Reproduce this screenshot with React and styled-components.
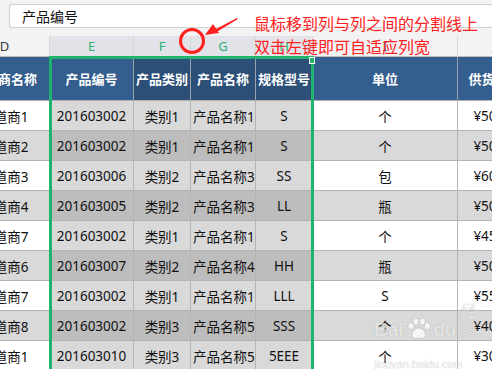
import React from 'react';
import styled, { createGlobalStyle } from 'styled-components';

const GlobalStyle = createGlobalStyle`
  html, body {
    margin: 0;
    padding: 0;
    overflow: hidden;
  }
  body {
    font-family: "Noto Sans", "Noto Sans CJK SC", sans-serif;
  }
`;

const COLS = '90px 84px 57px 65px 57px 145px 74px';
const GREEN = '#20b36e';

const Screen = styled.div`
  position: relative;
  width: 492px;
  height: 369px;
  overflow: hidden;
  background: #f3f3f3;
`;

const FormulaBar = styled.div`
  height: 36px;
  box-sizing: border-box;
  padding: 4px 0 0 9px;
`;

const FormulaInput = styled.div`
  height: 24px;
  box-sizing: border-box;
  display: flex;
  align-items: center;
  padding-left: 12px;
  background: #fff;
  border: 1px solid #d0d0d0;
  border-right: none;
  border-radius: 3px 0 0 3px;
  font-family: "Noto Sans CJK SC", sans-serif;
  font-size: 14px;
  color: #111;
`;

const Sheet = styled.div`
  margin-left: -40px;
  width: 572px;
`;

const Row = styled.div`
  display: grid;
  grid-template-columns: ${COLS};
  height: ${p => p.$h}px;
`;

const Letter = styled.div`
  display: flex;
  align-items: center;
  justify-content: center;
  box-sizing: border-box;
  border-right: 1px solid #d6d6d6;
  border-bottom: 1px solid #bdbdbd;
  background: ${p => (p.$sel ? '#e1e3e8' : '#f3f3f3')};
  color: ${p => (p.$sel ? '#2fb476' : '#2f3a4a')};
  font-family: "Noto Sans", "Liberation Sans", sans-serif;
  font-size: 13px;
`;

const HeadCell = styled.div`
  display: flex;
  align-items: center;
  justify-content: center;
  box-sizing: border-box;
  overflow: hidden;
  white-space: nowrap;
  background: ${p => (p.$sel ? '#2c4f77' : '#345e8e')};
  border-right: 1px solid #9aa2ac;
  border-bottom: 1px solid #b0b0b0;
  color: #fff;
  font-family: "Noto Sans CJK SC", sans-serif;
  font-weight: 700;
  font-size: 13px;
`;

const Cell = styled.div`
  display: flex;
  align-items: center;
  justify-content: ${p => (p.$left ? 'flex-start' : 'center')};
  padding-left: ${p => (p.$left ? '2px' : '0')};
  box-sizing: border-box;
  overflow: hidden;
  white-space: nowrap;
  background: ${p => p.$bg};
  border-right: 1px solid #b4b4b4;
  border-bottom: 1px solid #b4b4b4;
  color: #111;
  font-size: 13.5px;
`;

const Selection = styled.div`
  position: absolute;
  left: 49px;
  top: 56px;
  width: 265px;
  height: 330px;
  box-sizing: border-box;
  border: 3px solid ${GREEN};
  pointer-events: none;
`;

const Handle = styled.div`
  position: absolute;
  left: 309px;
  top: 57px;
  width: 6px;
  height: 7px;
  box-sizing: border-box;
  background: ${GREEN};
  border: 1px solid #fff;
`;

const Note = styled.div`
  position: absolute;
  left: 254px;
  top: 12px;
  color: #ff2020;
  font-family: "Noto Sans CJK SC", sans-serif;
  font-size: 16px;
  line-height: 23px;
  white-space: nowrap;
`;

const Marker = styled.svg`
  position: absolute;
  left: 170px;
  top: 10px;
`;

const Watermark = styled.div`
  position: absolute;
  left: 374px;
  top: 300px;
  color: rgba(255, 255, 255, 0.7);
  text-shadow: 0 0 1px rgba(0, 0, 0, 0.25);
  pointer-events: none;
`;

const MarkLine = styled.div`
  display: flex;
  align-items: flex-end;
  gap: 2px;
  font-family: "Liberation Sans", sans-serif;
  font-weight: 700;
  font-size: 19px;
  line-height: 20px;
`;

const MarkCn = styled.span`
  font-family: "Noto Sans CJK SC", sans-serif;
  font-size: 16px;
  font-weight: 400;
  margin-left: 2px;
`;

const MarkUrl = styled.div`
  margin-top: 18px;
  font-family: "Liberation Sans", sans-serif;
  font-size: 11px;
`;

const letters = ['D', 'E', 'F', 'G', 'H', 'I', 'J'];
const heads = ['渠道商名称', '产品编号', '产品类别', '产品名称', '规格型号', '单位', '供货单价'];

const rows = [
  ['渠道商1', '201603002', '类别1', '产品名称1', 'S', '个', '¥50.00'],
  ['渠道商2', '201603002', '类别1', '产品名称1', 'S', '个', '¥50.00'],
  ['渠道商3', '201603006', '类别2', '产品名称3', 'SS', '包', '¥60.00'],
  ['渠道商4', '201603005', '类别2', '产品名称3', 'LL', '瓶', '¥50.00'],
  ['渠道商7', '201603002', '类别1', '产品名称1', 'S', '个', '¥45.00'],
  ['渠道商6', '201603007', '类别2', '产品名称4', 'HH', '瓶', '¥50.00'],
  ['渠道商7', '201603002', '类别1', '产品名称1', 'LLL', 'S', '¥55.00'],
  ['渠道商8', '201603002', '类别3', '产品名称5', 'SSS', '个', '¥40.00'],
  ['渠道商1', '201603010', '类别3', '产品名称5', '5EEE', '个', '¥30.00'],
];

const isSel = c => c >= 1 && c <= 4;

function cellBg(r, c) {
  const striped = r % 2 === 1;
  if (isSel(c)) return striped ? '#bdbdbd' : '#d9d9d9';
  return striped ? '#d9d9d9' : '#ffffff';
}

export default function App() {
  return (
    <Screen>
      <GlobalStyle />
      <FormulaBar>
        <FormulaInput>产品编号</FormulaInput>
      </FormulaBar>

      <Sheet>
        <Row $h={21}>
          {letters.map((l, c) => (
            <Letter key={l} $sel={isSel(c)}>{l}</Letter>
          ))}
        </Row>
        <Row $h={44}>
          {heads.map((h, c) => (
            <HeadCell key={h} $sel={c >= 2 && c <= 4}>{h}</HeadCell>
          ))}
        </Row>
        {rows.map((row, r) => (
          <Row $h={30} key={`row-${r}`}>
            {row.map((v, c) => (
              <Cell key={`cell-${r}-${c}`} $bg={cellBg(r, c)} $left={c === 3}>
                {v}
              </Cell>
            ))}
          </Row>
        ))}
      </Sheet>

      <Selection />
      <Handle />

      <Watermark>
        <MarkLine>
          <span>Bai</span>
          <svg width="26" height="22" viewBox="0 0 26 22">
            <g fill="rgba(255,255,255,0.75)" stroke="rgba(0,0,0,0.15)" strokeWidth="0.8">
              <ellipse cx="5" cy="8" rx="3" ry="3.6" />
              <ellipse cx="10" cy="3.5" rx="3" ry="3.4" />
              <ellipse cx="16.5" cy="3.5" rx="3" ry="3.4" />
              <ellipse cx="21.5" cy="8" rx="3" ry="3.6" />
              <path d="M13 10 C8 10 5 16 6.5 19 C8 21.5 11 20 13 20 C15 20 18 21.5 19.5 19 C21 16 18 10 13 10 Z" />
            </g>
          </svg>
          <span>du</span>
          <MarkCn>经验</MarkCn>
        </MarkLine>
        <MarkUrl>jingyan.baidu.com</MarkUrl>
      </Watermark>

      <Marker width="80" height="50" viewBox="0 0 80 50">
        <circle cx="22" cy="31" r="11.5" fill="none" stroke="#ff2020" strokeWidth="3" />
        <path d="M67 8 L45 19.5 L46.5 22 L68 9 Z" fill="#ff2020" />
        <path d="M35 25 L43 14 L49 23 Z" fill="#ff2020" />
      </Marker>

      <Note>
        <div>鼠标移到列与列之间的分割线上</div>
        <div>双击左键即可自适应列宽</div>
      </Note>
    </Screen>
  );
}
